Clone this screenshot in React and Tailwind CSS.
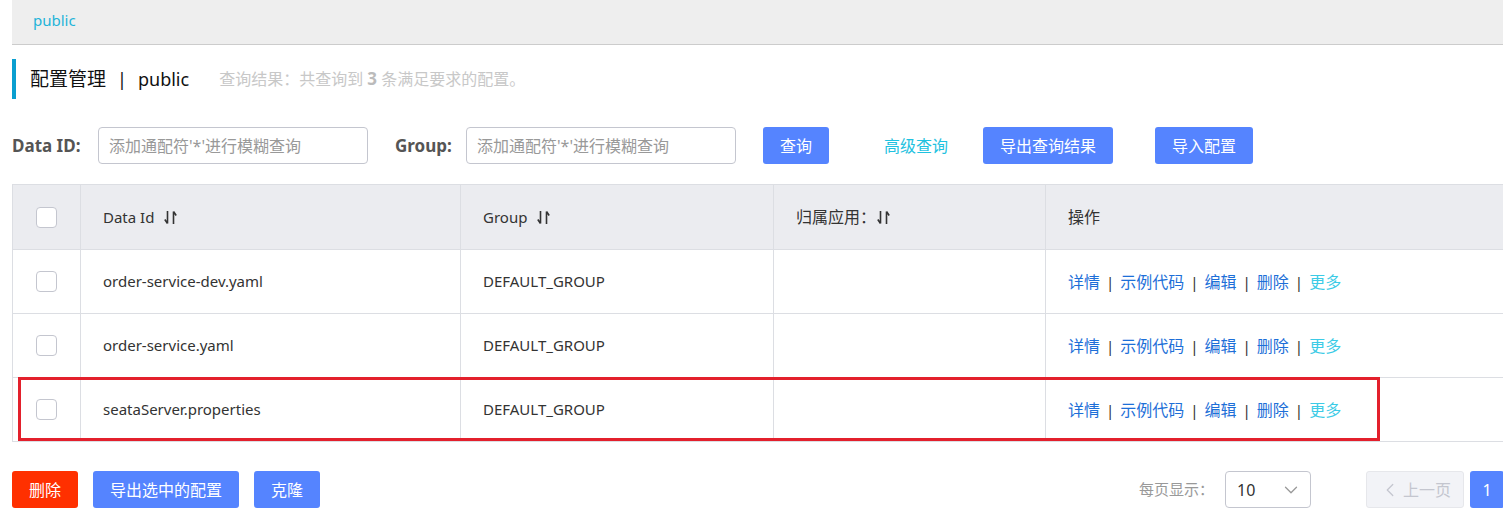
import React from "react";
import { ChevronDown, ChevronLeft } from "lucide-react";

const rows = [
  { id: "order-service-dev.yaml", group: "DEFAULT_GROUP" },
  { id: "order-service.yaml", group: "DEFAULT_GROUP" },
  { id: "seataServer.properties", group: "DEFAULT_GROUP" },
];

function SortIcon({ className = "ml-[10px]" }) {
  return (
    <svg width="13" height="15" viewBox="0 0 13 15" className={`${className} inline-block`} fill="none" stroke="#333" strokeWidth="1.6">
      <path d="M3.5 1v12.5M3.5 13.5L0.8 9.5" />
      <path d="M9.5 14V1.5M9.5 1.5l2.7 4" />
    </svg>
  );
}

function Checkbox() {
  return <div className="w-[21px] h-[21px] rounded-[4px] border border-[#c4c6cf] bg-white" />;
}

function Sep() {
  return <span className="mx-[6px] text-[#333] text-[15px]">|</span>;
}

export default function App() {
  return (
    <div className="w-full h-[515px] overflow-hidden bg-white text-[15px] text-[#333] font-['Noto_Sans','Noto_Sans_CJK_SC',sans-serif]">
      <div className="w-[1540px] pl-3">
        {/* breadcrumb bar */}
        <div className="h-[45px] bg-[#eeeeee] border-b border-[#cccccc] pl-[21px] pt-[9px] text-[15px] text-[#1fb4d9]">
          public
        </div>

        {/* title */}
        <div className="mt-[14px] h-[40px] border-l-4 border-[#0a9fd0] pl-[14px] flex items-center">
          <span className="text-[19px] text-[#111]">配置管理</span>
          <span className="text-[18px] text-[#111] mx-[11px]">|</span>
          <span className="text-[18px] text-[#111]">public</span>
          <span className="ml-[30px] text-[16px] text-[#c8c8c8]">
            查询结果：共查询到 <b className="text-[17px] text-[#bbb]">3</b> 条满足要求的配置。
          </span>
        </div>

        {/* search row */}
        <div className="mt-[28px] flex items-center h-[37px]">
          <span className="font-bold text-[17px] text-[#555] w-[86px]">Data ID:</span>
          <input
            className="w-[270px] h-[37px] rounded-[4px] border border-[#c4c6cf] px-[10px] text-[16px] placeholder:text-[#999] outline-none"
            placeholder="添加通配符'*'进行模糊查询"
          />
          <span className="ml-[27px] font-bold text-[17px] text-[#555] w-[71px]">Group:</span>
          <input
            className="w-[270px] h-[37px] rounded-[4px] border border-[#c4c6cf] px-[10px] text-[16px] placeholder:text-[#999] outline-none"
            placeholder="添加通配符'*'进行模糊查询"
          />
          <button className="ml-[27px] w-[66px] h-[37px] rounded-[3px] bg-[#5584ff] text-white text-[16px]">查询</button>
          <button className="ml-[55px] text-[#1fc2e0] text-[16px]">高级查询</button>
          <button className="ml-[35px] w-[130px] h-[37px] rounded-[3px] bg-[#5584ff] text-white text-[16px]">导出查询结果</button>
          <button className="ml-[42px] w-[98px] h-[37px] rounded-[3px] bg-[#5584ff] text-white text-[16px]">导入配置</button>
        </div>

        {/* table */}
        <div className="relative mt-[20px]">
          <table className="w-[1528px] border-collapse table-fixed">
            <colgroup>
              <col className="w-[68px]" />
              <col className="w-[380px]" />
              <col className="w-[313px]" />
              <col className="w-[272px]" />
              <col />
            </colgroup>
            <thead>
              <tr className="h-[65px] bg-[#ebecf0]">
                <th className="border border-[#dcdee3] font-normal">
                  <div className="flex justify-center"><Checkbox /></div>
                </th>
                <th className="border border-[#dcdee3] font-normal text-left pl-[22px]">
                  <span className="inline-flex items-center">Data Id<SortIcon /></span>
                </th>
                <th className="border border-[#dcdee3] font-normal text-left pl-[22px]">
                  <span className="inline-flex items-center">Group<SortIcon /></span>
                </th>
                <th className="border border-[#dcdee3] font-normal text-left pl-[22px]">
                  <span className="inline-flex items-center text-[16px]">归属应用：<SortIcon className="ml-[1px]" /></span>
                </th>
                <th className="border border-[#dcdee3] font-normal text-left pl-[22px] text-[16px]">操作</th>
              </tr>
            </thead>
            <tbody>
              {rows.map((r) => (
                <tr key={r.id} className="h-[64px]">
                  <td className="border border-[#dcdee3]">
                    <div className="flex justify-center"><Checkbox /></div>
                  </td>
                  <td className="border border-[#dcdee3] pl-[22px]">{r.id}</td>
                  <td className="border border-[#dcdee3] pl-[22px]">{r.group}</td>
                  <td className="border border-[#dcdee3]" />
                  <td className="border border-[#dcdee3] pl-[22px] text-[16px]">
                    <span className="text-[#1d6fd8]">详情</span>
                    <Sep />
                    <span className="text-[#1d6fd8]">示例代码</span>
                    <Sep />
                    <span className="text-[#1d6fd8]">编辑</span>
                    <Sep />
                    <span className="text-[#1d6fd8]">删除</span>
                    <Sep />
                    <span className="text-[#3ccbe6]">更多</span>
                  </td>
                </tr>
              ))}
            </tbody>
          </table>
          {/* highlight box */}
          <div className="absolute left-[6px] top-[193px] w-[1362px] h-[64px] border-[3px] border-[#e3202c] pointer-events-none" />
        </div>

        {/* footer */}
        <div className="mt-[29px] flex items-center h-[37px]">
          <button className="w-[66px] h-[37px] rounded-[3px] bg-[#ff3000] text-white text-[16px]">删除</button>
          <button className="ml-[15px] w-[146px] h-[37px] rounded-[3px] bg-[#5584ff] text-white text-[16px]">导出选中的配置</button>
          <button className="ml-[15px] w-[66px] h-[37px] rounded-[3px] bg-[#5584ff] text-white text-[16px]">克隆</button>
          <span className="ml-[819px] text-[#999]">每页显示：</span>
          <div className="ml-[11px] w-[86px] h-[37px] rounded-[4px] border border-[#c4c6cf] flex items-center justify-between pl-[11px] pr-[8px]">
            <span className="text-[#333] text-[16px]">10</span>
            <ChevronDown size={22} strokeWidth={1.4} color="#999" />
          </div>
          <button className="ml-[55px] w-[98px] h-[37px] rounded-[3px] bg-[#f2f3f7] border border-[#e6e7eb] text-[#c4c6cf] text-[16px] flex items-center justify-center">
            <ChevronLeft size={22} strokeWidth={1.4} color="#c4c6cf" />
            <span className="ml-[2px]">上一页</span>
          </button>
          <button className="ml-[6px] w-[34px] h-[37px] rounded-[3px] bg-[#5584ff] text-white text-[16px]">1</button>
        </div>
      </div>
    </div>
  );
}
